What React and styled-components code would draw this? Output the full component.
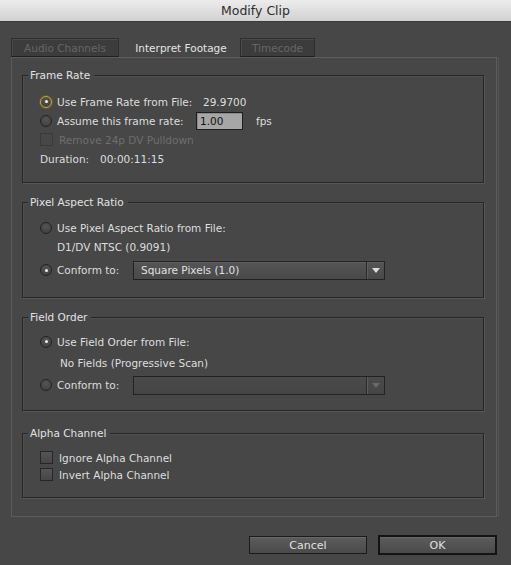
import React from "react";
import styled, { createGlobalStyle, css } from "styled-components";

const Global = createGlobalStyle`
  html, body { margin: 0; padding: 0; background: #474747; }
  body { font-family: "DejaVu Sans", "Liberation Sans", sans-serif; font-size: 10.5px; color: #dedede; }
`;

const Window = styled.div`
  width: 511px;
  height: 565px;
  display: flex;
  flex-direction: column;
  background: #474747;
  overflow: hidden;
`;

const TitleBar = styled.div`
  height: 21px;
  flex: none;
  display: flex;
  align-items: center;
  justify-content: center;
  background: linear-gradient(#ececec, #d2d2d2);
  border-bottom: 1px solid #3a3a3a;
  color: #2c2c2c;
  font-size: 12.5px;
`;

const Main = styled.div`
  flex: 1;
  display: flex;
  flex-direction: column;
  padding: 16px 14px 10px 11px;
`;

const TabRow = styled.div`
  display: flex;
  height: 19px;
  align-items: stretch;
`;

const Tab = styled.div`
  width: ${(p) => p.$w}px;
  margin-right: ${(p) => p.$gap || 0}px;
  display: flex;
  align-items: center;
  justify-content: center;
  box-sizing: border-box;
  ${(p) =>
    p.$active
      ? css`
          color: #e4e4e4;
          background: #474747;
        `
      : css`
          color: #666;
          background: #3c3c3c;
          border: 1px solid #2e2e2e;
          border-bottom: 1px solid #202020;
          box-shadow: inset 1px 1px 0 #4a4a4a;
        `}
`;

const Pane = styled.div`
  height: 460px;
  box-sizing: border-box;
  border: 1px solid #5b5b5b;
  box-shadow: 3px 0 0 -2px #474747, 3px 0 0 -1px #545454;
  display: flex;
  flex-direction: column;
  padding: 17px 12px 0 10px;
`;

const Group = styled.div`
  position: relative;
  height: ${(p) => p.$h}px;
  margin-bottom: ${(p) => p.$mb || 0}px;
  box-sizing: border-box;
  border: 1px solid #262626;
  box-shadow: 1px 1px 0 #575757, inset 1px 1px 0 #505050;
  padding: ${(p) => p.$pt}px 0 0 17px;
  display: flex;
  flex-direction: column;
`;

const Legend = styled.span`
  position: absolute;
  top: -8px;
  left: 5px;
  padding: 0 4px 0 2px;
  line-height: 15px;
  background: #474747;
  color: #e2e2e2;
`;

const Row = styled.div`
  display: flex;
  align-items: center;
  height: ${(p) => p.$h || 19}px;
  margin-top: ${(p) => p.$mt || 0}px;
  padding-left: ${(p) => p.$indent || 0}px;
  color: ${(p) => (p.$disabled ? "#6e6e6e" : "#dedede")};
  white-space: nowrap;
`;

const Radio = styled.span`
  width: 12px;
  height: 12px;
  box-sizing: border-box;
  border-radius: 50%;
  flex: none;
  margin-right: 5px;
  border: 1px solid #232323;
  background: radial-gradient(circle at 50% 35%, #555, #3c3c3c);
  display: flex;
  align-items: center;
  justify-content: center;
  ${(p) =>
    p.$focus &&
    css`
      border-color: #c8aa3c;
      box-shadow: 0 0 0 1px #6a5a25;
    `}
  &::after {
    content: "";
    width: 3px;
    height: 3px;
    border-radius: 50%;
    background: ${(p) => (p.$checked ? "#f0f0f0" : "transparent")};
  }
`;

const Check = styled.span`
  width: 11px;
  height: 11px;
  flex: none;
  margin-right: 6px;
  border: 1px solid ${(p) => (p.$disabled ? "#3a3a3a" : "#262626")};
  background: ${(p) => (p.$disabled ? "#474747" : "linear-gradient(#555, #464646)")};
`;

const Label = styled.span`
  display: inline-block;
  width: ${(p) => (p.$w ? `${p.$w}px` : "auto")};
`;

const NumInput = styled.span`
  width: 47px;
  height: 18px;
  box-sizing: border-box;
  display: inline-flex;
  align-items: center;
  padding-left: 3px;
  background: #a6a6a6;
  border: 1px solid #1e1e1e;
  box-shadow: inset 1px 1px 0 #8a8a8a;
  color: #111;
  margin-right: 13px;
`;

const Select = styled.div`
  width: 252px;
  height: 19px;
  box-sizing: border-box;
  display: flex;
  border: 1px solid #222;
  background: ${(p) => (p.$disabled ? "linear-gradient(#4b4b4b, #454545)" : "linear-gradient(#555, #494949)")};
  box-shadow: ${(p) => (p.$disabled ? "none" : "inset 0 1px 0 #606060")};
  color: #e0e0e0;
`;

const SelectText = styled.div`
  flex: 1;
  display: flex;
  align-items: center;
  padding-left: 7px;
`;

const SelectArrow = styled.div`
  width: 17px;
  display: flex;
  align-items: center;
  justify-content: center;
  border-left: 1px solid #2a2a2a;
  box-shadow: inset 1px 0 0 #5e5e5e;
  &::after {
    content: "";
    border-left: 4px solid transparent;
    border-right: 4px solid transparent;
    border-top: 5px solid ${(p) => (p.$disabled ? "#6a6a6a" : "#dcdcdc")};
  }
`;

const Footer = styled.div`
  margin-top: auto;
  display: flex;
  justify-content: flex-end;
  align-items: center;
  gap: 11px;
  height: 20px;
`;

const Button = styled.button`
  font: inherit;
  font-size: 11px;
  color: #e0e0e0;
  width: ${(p) => p.$w}px;
  height: ${(p) => (p.$default ? 20 : 18)}px;
  box-sizing: border-box;
  border: ${(p) => (p.$default ? "2px solid #141414" : "1px solid #1c1c1c")};
  background: linear-gradient(#5c5c5c, #4a4a4a);
  box-shadow: inset 0 1px 0 #686868;
  padding: 0;
  margin: 0;
`;

export default function App() {
  return (
    <Window>
      <Global />
      <TitleBar>Modify Clip</TitleBar>
      <Main>
        <TabRow>
          <Tab $w={108} $gap={5}>Audio Channels</Tab>
          <Tab $w={114} $gap={2} $active>Interpret Footage</Tab>
          <Tab $w={75}>Timecode</Tab>
        </TabRow>
        <Pane>
          <Group $h={108} $mb={19} $pt={16}>
            <Legend>Frame Rate</Legend>
            <Row>
              <Radio $checked $focus />
              <Label $w={146}>Use Frame Rate from File:</Label>
              <span>29.9700</span>
            </Row>
            <Row>
              <Radio />
              <Label $w={139}>Assume this frame rate:</Label>
              <NumInput>1.00</NumInput>
              <span>fps</span>
            </Row>
            <Row $disabled>
              <Check $disabled />
              Remove 24p DV Pulldown
            </Row>
            <Row>
              <Label $w={60}>Duration:</Label>
              <span>00:00:11:15</span>
            </Row>
          </Group>

          <Group $h={96} $mb={19} $pt={15}>
            <Legend>Pixel Aspect Ratio</Legend>
            <Row>
              <Radio />
              Use Pixel Aspect Ratio from File:
            </Row>
            <Row $indent={17}>D1/DV NTSC (0.9091)</Row>
            <Row $h={20} $mt={4}>
              <Radio $checked />
              <Label $w={76}>Conform to:</Label>
              <Select>
                <SelectText>Square Pixels (1.0)</SelectText>
                <SelectArrow />
              </Select>
            </Row>
          </Group>

          <Group $h={94} $mb={22} $pt={14}>
            <Legend>Field Order</Legend>
            <Row>
              <Radio $checked />
              Use Field Order from File:
            </Row>
            <Row $indent={20} $mt={2}>No Fields (Progressive Scan)</Row>
            <Row $h={20} $mt={3}>
              <Radio />
              <Label $w={76}>Conform to:</Label>
              <Select $disabled>
                <SelectText />
                <SelectArrow $disabled />
              </Select>
            </Row>
          </Group>

          <Group $h={65} $pt={15}>
            <Legend>Alpha Channel</Legend>
            <Row $h={17}>
              <Check />
              Ignore Alpha Channel
            </Row>
            <Row $h={17}>
              <Check />
              Invert Alpha Channel
            </Row>
          </Group>
        </Pane>
        <Footer>
          <Button $w={118}>Cancel</Button>
          <Button $w={119} $default>OK</Button>
        </Footer>
      </Main>
    </Window>
  );
}
